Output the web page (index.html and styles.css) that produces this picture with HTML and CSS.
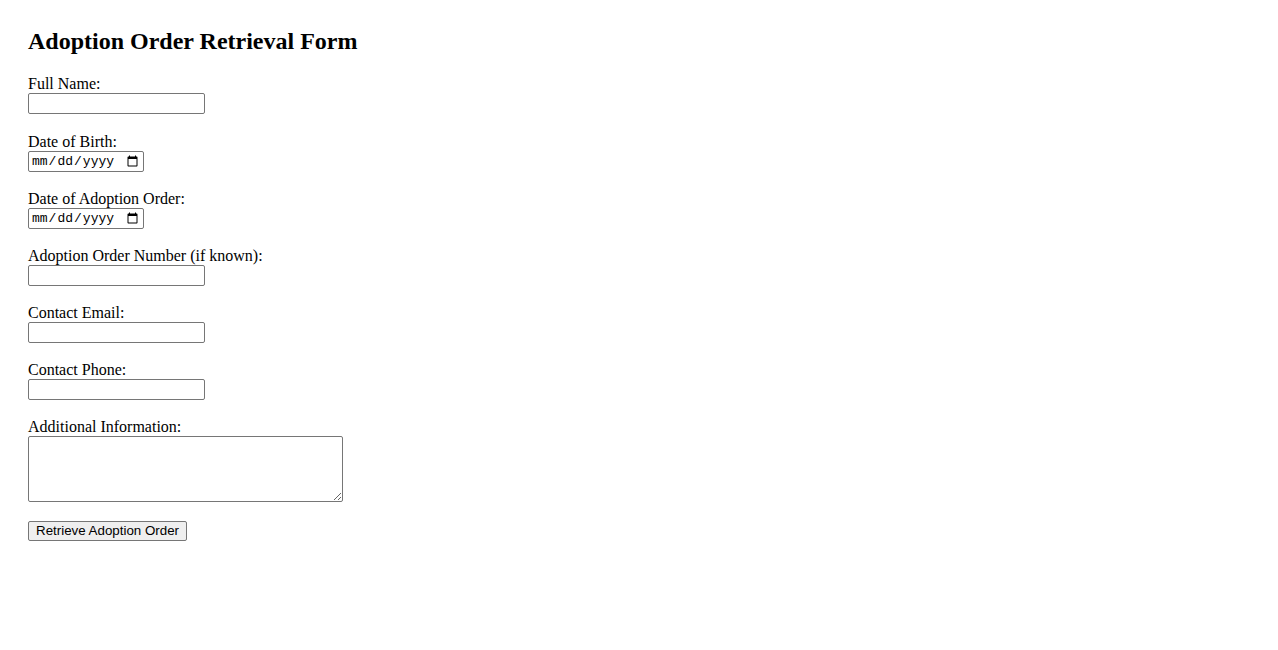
FILE: index.html
```html
<!DOCTYPE html>
<html lang="en">
<head>
<meta charset="utf-8">
<title>Adoption Order Retrieval Form</title>
<link rel="stylesheet" href="styles.css">
</head>
<body>
<div class="page">
  <h2 class="title">Adoption Order Retrieval Form</h2>
  <form class="form">
    <div class="field">
      <label class="label" for="name">Full Name:</label>
      <input class="text-input" type="text" id="name">
    </div>
    <div class="field">
      <label class="label" for="dob">Date of Birth:</label>
      <input class="date-input" type="date" id="dob">
    </div>
    <div class="field">
      <label class="label" for="doa">Date of Adoption Order:</label>
      <input class="date-input" type="date" id="doa">
    </div>
    <div class="field">
      <label class="label" for="num">Adoption Order Number (if known):</label>
      <input class="text-input" type="text" id="num">
    </div>
    <div class="field">
      <label class="label" for="email">Contact Email:</label>
      <input class="text-input" type="email" id="email">
    </div>
    <div class="field">
      <label class="label" for="phone">Contact Phone:</label>
      <input class="text-input" type="tel" id="phone">
    </div>
    <div class="field field-area">
      <label class="label" for="info">Additional Information:</label>
      <textarea class="area-input" id="info"></textarea>
    </div>
    <div class="actions">
      <button class="submit" type="submit">Retrieve Adoption Order</button>
    </div>
  </form>
</div>
</body>
</html>
```
FILE: styles.css
```css
html, body {
  margin: 0;
  padding: 0;
  background: #ffffff;
}
body {
  font-family: "Liberation Serif", "Times New Roman", serif;
  font-size: 16px;
  color: #000000;
}
.page {
  padding: 27px 28px 28px 28px;
}
.title {
  margin: 0 0 20px 0;
  font-size: 24px;
  line-height: 28px;
  font-weight: bold;
}
.form {
  display: flex;
  flex-direction: column;
  align-items: flex-start;
}
.field {
  display: flex;
  flex-direction: column;
  align-items: flex-start;
  margin-bottom: 18px;
}
.field:first-child {
  margin-bottom: 19px;
}
.field-area {
  margin-bottom: 19px;
}
.label {
  display: block;
  line-height: 18px;
  height: 18px;
}
.text-input,
.date-input,
.area-input {
  box-sizing: border-box;
  margin: 0;
  border: 1px solid #767676;
  border-radius: 2px;
  background: #ffffff;
  font-family: "Liberation Sans", Arial, sans-serif;
  font-size: 13.33px;
}
.text-input {
  width: 177px;
  height: 21px;
  padding: 1px 2px;
}
.date-input {
  width: 116px;
  height: 21px;
  padding: 1px 2px;
  font-family: "Liberation Mono", "DejaVu Sans Mono", monospace;
  font-size: 13px;
  color: #000;
}
.area-input {
  width: 315px;
  height: 66px;
  padding: 2px;
  resize: both;
  font-family: "Liberation Mono", monospace;
}
.submit {
  box-sizing: border-box;
  margin: 0;
  width: 159px;
  height: 20px;
  padding: 0 6px;
  border: 1px solid #767676;
  border-radius: 2px;
  background: #efefef;
  color: #000;
  font-family: "Liberation Sans", Arial, sans-serif;
  font-size: 13.33px;
  line-height: 16px;
}
```
